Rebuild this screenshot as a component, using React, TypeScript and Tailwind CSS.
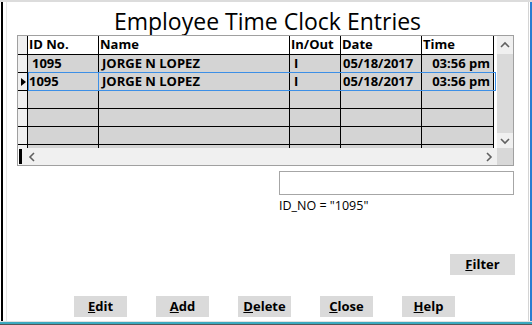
import { ReactNode } from "react";

type Row = { id: string; name: string; io: string; date: string; time: string };

const rows: Row[] = [
  { id: "1095", name: "JORGE N LOPEZ", io: "I", date: "05/18/2017", time: "03:56 pm" },
  { id: "1095", name: "JORGE N LOPEZ", io: "I", date: "05/18/2017", time: "03:56 pm" },
  { id: "", name: "", io: "", date: "", time: "" },
  { id: "", name: "", io: "", date: "", time: "" },
  { id: "", name: "", io: "", date: "", time: "" },
];

const cols = ["w-[71px]", "w-[191px]", "w-[51px]", "w-[81px]", "w-[72px]"];

const Chevron = ({ dir }: { dir: "up" | "down" | "left" | "right" }) => {
  const pts = {
    up: "1,6 5,2 9,6",
    down: "1,2 5,6 9,2",
    left: "6,1 2,5 6,9",
    right: "2,1 6,5 2,9",
  }[dir];
  const box = dir === "up" || dir === "down" ? "0 0 10 8" : "0 0 8 10";
  const size = dir === "up" || dir === "down" ? "w-[10px] h-[8px]" : "w-[8px] h-[10px]";
  return (
    <svg viewBox={box} className={size}>
      <polyline points={pts} fill="none" stroke="#606060" strokeWidth="1.6" />
    </svg>
  );
};

const Btn = ({ k, rest, className }: { k: string; rest: string; className?: string }) => (
  <div
    className={`h-[21px] bg-[#dadada] flex items-center justify-center text-[13px] font-bold text-black ${className ?? ""}`}
  >
    <span className="underline">{k}</span>
    {rest}
  </div>
);

const Cell = ({ w, children, className }: { w: string; children?: ReactNode; className?: string }) => (
  <div className={`${w} h-full border-r border-black flex items-center whitespace-nowrap ${className ?? ""}`}>
    {children}
  </div>
);

export default function App() {
  return (
    <div
      className="w-[532px] h-[325px] bg-white flex flex-col overflow-hidden text-black"
      style={{ fontFamily: '"Open Sans", "Noto Sans", sans-serif' }}
    >
      <div className="h-[2px] bg-[#dcdcdc]" />
      <div className="flex flex-1 min-h-0">
        <div className="w-[1px] bg-white" />
        <div className="w-[2px] bg-black" />
        <div className="w-[3px] bg-white" />
        <div className="w-[1px] bg-[#e6e6e6]" />

        <div className="flex-1 flex flex-col">
          <div className="h-[33px] flex items-start justify-center pt-[4px] text-[23px] leading-[31px]">
            Employee Time Clock Entries
          </div>

          {/* grid */}
          <div className="ml-[10px] w-[497px] h-[131px] border border-[#a0a0a0] flex flex-col text-[13px] font-bold">
            <div className="flex h-[112px]">
              <div className="w-[476px] flex flex-col">
                <div className="flex h-[19px] border-b border-black bg-white">
                  <Cell w="w-[10px]" className="bg-[#f0f0f0]" />
                  {["ID No.", "Name", "In/Out", "Date", "Time"].map((h, i) => (
                    <Cell key={h} w={cols[i]} className="pl-[1px]">
                      {h}
                    </Cell>
                  ))}
                </div>
                {rows.map((r, i) => (
                  <div key={i} className="relative flex h-[18px] border-b border-black bg-[#d4d4d4]">
                    <Cell w="w-[10px]" className="bg-[#f0f0f0] justify-center">
                      {i === 1 && (
                        <svg viewBox="0 0 5 8" className="w-[5px] h-[8px] ml-[1px]">
                          <polygon points="0,0 5,4 0,8" fill="#000" />
                        </svg>
                      )}
                    </Cell>
                    <Cell w={cols[0]} className={i === 1 ? "pl-[1px]" : "pl-[4px]"}>
                      {r.id}
                    </Cell>
                    <Cell w={cols[1]} className="pl-[3px]">
                      {r.name}
                    </Cell>
                    <Cell w={cols[2]} className="pl-[4px]">
                      {r.io}
                    </Cell>
                    <Cell w={cols[3]} className="pl-[2px]">
                      {r.date}
                    </Cell>
                    <Cell w={cols[4]} className="justify-end pr-[3px]">
                      {r.time}
                    </Cell>
                    {i === 1 && (
                      <>
                        <div className="absolute top-[-1px] left-[10px] w-[468px] h-[19px] border border-[#3c8fe6]" />
                        <div className="absolute top-[-1px] left-[10px] w-[71px] h-[19px] border border-[#3c8fe6]" />
                      </>
                    )}
                  </div>
                ))}
                <div className="flex flex-1 bg-[#d4d4d4]">
                  <Cell w="w-[10px]" className="bg-[#f0f0f0]" />
                  {cols.map((c) => (
                    <Cell key={c} w={c} />
                  ))}
                </div>
              </div>
              <div className="w-[3px] bg-white" />
              <div className="w-[16px] flex flex-col">
                <div className="h-[18px] bg-[#f0f0f0] flex items-center justify-center">
                  <Chevron dir="up" />
                </div>
                <div className="flex-1 bg-[#dadada]" />
                <div className="h-[15px] bg-[#f0f0f0] flex items-center justify-center">
                  <Chevron dir="down" />
                </div>
              </div>
            </div>
            <div className="flex h-[17px]">
              <div className="w-[479px] bg-[#f0f0f0] flex items-center">
                <div className="w-[1px] h-full bg-white" />
                <div className="w-[3px] h-[15px] bg-black self-start mt-[1px]" />
                <div className="ml-[6px]">
                  <Chevron dir="left" />
                </div>
                <div className="ml-auto mr-[4px]">
                  <Chevron dir="right" />
                </div>
              </div>
              <div className="w-[16px] bg-[#d8d8d8]" />
            </div>
          </div>

          <div className="ml-[272px] mt-[5px] w-[235px] h-[24px] border border-[#a6a6a6]" />
          <div className="ml-[272px] mt-[3px] text-[12.5px] leading-[16px]">ID_NO = "1095"</div>

          <div className="flex justify-end mr-[13px] mt-[40px]">
            <Btn k="F" rest="ilter" className="w-[65px]" />
          </div>

          <div className="flex gap-[29px] ml-[67px] mt-[21px]">
            <Btn k="E" rest="dit" className="w-[53px]" />
            <Btn k="A" rest="dd" className="w-[53px]" />
            <Btn k="D" rest="elete" className="w-[53px]" />
            <Btn k="C" rest="lose" className="w-[53px]" />
            <Btn k="H" rest="elp" className="w-[53px]" />
          </div>
        </div>

        <div className="w-[1px] bg-[#d4d4d4]" />
        <div className="w-[1px] bg-white" />
        <div className="w-[2px] bg-[#2a7dd1]" />
      </div>
      <div className="h-[1px] bg-[#e0e0e0]" />
      <div className="h-[2px] bg-[#3aa9bf]" />
      <div className="h-[1px] bg-[#555]" />
    </div>
  );
}
